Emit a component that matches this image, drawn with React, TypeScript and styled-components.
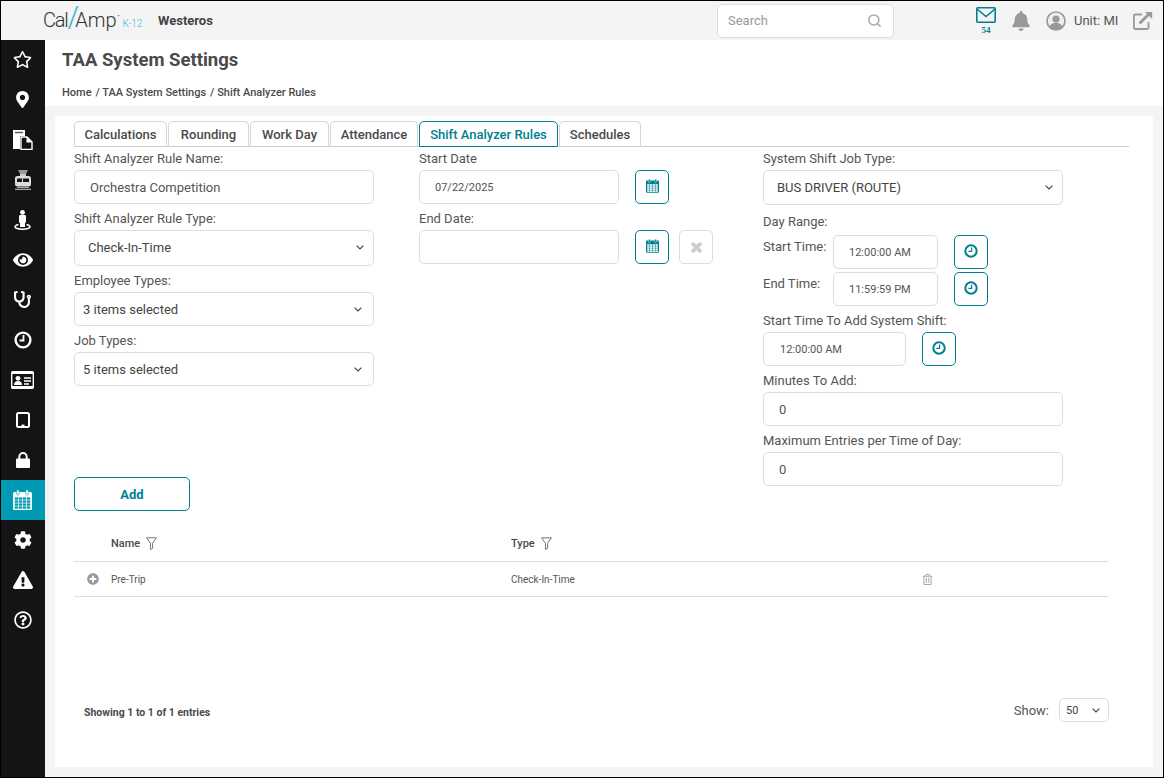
import React from "react";
import styled, { createGlobalStyle } from "styled-components";
import { Search } from "lucide-react";
import {
  FaRegStar, FaMapMarkerAlt, FaEye, FaStethoscope, FaCog,
  FaExclamationTriangle, FaRegQuestionCircle, FaBell,
  FaPlusCircle, FaRegTrashAlt,
} from "react-icons/fa";

const Global = createGlobalStyle`
  html, body { margin: 0; padding: 0; background: #000; }
  body { font-family: Roboto, "Liberation Sans", sans-serif; color: #4a4a4a; }
  * { box-sizing: border-box; }
`;

const teal = "#007f92";

const Frame = styled.div`
  width: 1164px; height: 778px; border: 1px solid #000; display: flex; flex-direction: column; background: #f4f4f4; overflow: hidden;
`;
const Header = styled.header`
  height: 39px; flex: none; display: flex; align-items: center; background: #f4f4f4;
`;
const Logo = styled.div`
  margin-left: 42px; width: 115px; display: flex; align-items: baseline; font-weight: 300; font-size: 20px; color: #333; line-height: 26px; padding-top: 1px;
`;
const LogoCal = styled.span`
  letter-spacing: -1.2px;
`;
const LogoSlash = styled.span`
  color: #27b4d6; font-size: 29px; margin: 0 -4px 0 0; line-height: 26px;
`;
const LogoMark = styled.span`
  font-size: 6px; line-height: 26px; position: relative; top: -9px; margin-left: 1px;
`;
const LogoK = styled.span`
  color: #35bcdc; font-size: 10px; margin-left: 3px; line-height: 26px;
`;
const Tenant = styled.div`
  font-size: 13px; font-weight: 700; color: #444; width: 559px;
`;
const SearchBox = styled.div`
  width: 177px; height: 34px; background: #fff; border: 1px solid #ddd; border-radius: 5px; display: flex; align-items: center; justify-content: space-between; padding: 0 11px 0 10px; font-size: 13px; color: #999;
`;
const HeaderIcons = styled.div`
  display: flex; align-items: center; margin-left: 82px;
`;
const MailWrap = styled.div`
  width: 20px; display: flex; flex-direction: column; align-items: center; color: ${teal};
`;
const MailCount = styled.span`
  font-family: "Liberation Serif", serif; font-weight: 700; font-size: 9px; line-height: 9px; margin-top: 3px;
`;
const BellSlot = styled.div`
  margin-left: 15px; width: 20px; display: flex; justify-content: center; color: #999;
`;
const UserSlot = styled.div`
  margin-left: 15px; display: flex; align-items: center; gap: 8px;
`;
const UnitText = styled.span`
  font-size: 13px; color: #555;
`;
const ExternalSlot = styled.div`
  margin-left: 15px; display: flex;
`;
const Body = styled.div`
  flex: 1; display: flex; min-height: 0;
`;
const Sidebar = styled.nav`
  width: 44px; flex: none; background: #141414; display: flex; flex-direction: column;
`;
const NavItem = styled.div<{ $active?: boolean }>`
  height: 40px; display: flex; align-items: center; justify-content: center; padding: 0 1px 1px 0; color: #fff; background: ${(p) => (p.$active ? "#009ab5" : "transparent")};
`;
const Main = styled.main`
  flex: 1; display: flex; flex-direction: column; min-width: 0;
`;
const TitleBand = styled.div`
  height: 66px; flex: none; background: #fff; padding-left: 17px;
`;
const Title = styled.h1`
  margin: 0; font-size: 18.5px; font-weight: 700; color: #4a4a4a; line-height: 24px; padding-top: 8px;
`;
const Crumbs = styled.div`
  margin-top: 14px; font-size: 11px; font-weight: 500; color: #4a4a4a; line-height: 14px; display: flex; gap: 4px;
`;
const Card = styled.section`
  margin: 10px; flex: 1; background: #fff; padding: 5px 45px 0 19px; display: flex; flex-direction: column;
`;
const Tabs = styled.div`
  display: flex; gap: 1px; height: 26px; border-bottom: 1px solid #ccc; margin-right: -21px;
`;
const Tab = styled.div<{ $active?: boolean; $w: number }>`
  width: ${(p) => p.$w}px; height: 26px; border: 1px solid ${(p) => (p.$active ? teal : "#d5d5d5")}; border-bottom: ${(p) => (p.$active ? `1px solid ${teal}` : "none")};
  border-radius: 5px 5px 0 0; display: flex; align-items: center; justify-content: center; font-size: 13px; font-weight: 500; color: ${(p) => (p.$active ? teal : "#4a4a4a")};
`;
const FormGrid = styled.div`
  display: grid; grid-template-columns: 345px 344px 300px; grid-template-rows: 1fr auto; height: 364px;
`;
const Col = styled.div`
  width: 300px; display: flex; flex-direction: column;
`;
const RightCol = styled(Col)`
  grid-column: 3; grid-row: 1 / span 2;
`;
const Label = styled.label`
  height: 23px; line-height: 23px; font-size: 13px; color: #555; display: block; white-space: nowrap;
`;
const Field = styled.div`
  margin-top: 3px;
  &:first-child { margin-top: 0; }
`;
const TextInput = styled.input<{ $w?: number; $pad?: number; $size?: number }>`
  display: block; width: ${(p) => (p.$w ? `${p.$w}px` : "100%")}; height: 34px; border: 1px solid #ddd; border-radius: 5px; padding: 0 0 0 ${(p) => p.$pad ?? 15}px; background: #fff;
  font-family: Roboto, sans-serif; font-size: ${(p) => p.$size ?? 13}px; color: #555; outline: none;
`;
const Select = styled.div`
  height: 36px; border: 1px solid #ddd; border-radius: 5px; background: #fff; display: flex; align-items: center; justify-content: space-between; padding: 0 9px 1px 13px; font-size: 13px; color: #444;
`;
const JobSelect = styled(Select)`
  height: 35px;
`;
const MultiSelect = styled(Select)`
  height: 34px; padding: 0 11px 0 8px;
`;
const DateRow = styled.div`
  display: flex; align-items: flex-start;
`;
const IconButton = styled.button<{ $muted?: boolean; $gap?: number; $lift?: number }>`
  width: 34px; height: 34px; flex: none; margin-left: ${(p) => p.$gap ?? 16}px; padding: 0 0 ${(p) => p.$lift ?? 2}px; background: #fff; border: 1px solid ${(p) => (p.$muted ? "#ddd" : teal)}; border-radius: 5px; display: flex; align-items: center; justify-content: center;
`;
const DayRange = styled(Label)`
  margin-top: 5px;
`;
const TimeRow = styled.div<{ $top: number }>`
  display: flex; margin-top: ${(p) => p.$top}px;
`;
const TimeLabel = styled(Label)`
  width: 70px;
`;
const AddButton = styled.button`
  grid-column: 1; grid-row: 2; width: 116px; height: 34px; background: #fff; border: 1px solid ${teal}; border-radius: 5px; font-family: Roboto, sans-serif; font-size: 13px; font-weight: 700; color: ${teal};
`;
const TableHead = styled.div`
  margin-top: 14px; height: 37px; border-bottom: 1px solid #ddd; display: grid; grid-template-columns: 37px 400px 1fr; align-items: center;
`;
const TableRow = styled.div`
  height: 35px; border-bottom: 1px solid #ddd; display: grid; grid-template-columns: 37px 400px 400px 1fr; align-items: center; font-size: 10px; color: #555;
`;
const HeadCell = styled.div`
  display: flex; align-items: center; gap: 6px; font-size: 11px; font-weight: 500; color: #4a4a4a;
`;
const Expand = styled.div`
  padding-left: 13px; display: flex; color: #999;
`;
const Trash = styled.div`
  padding-left: 11px; display: flex; color: #aaa;
`;
const Footer = styled.div`
  margin: 101px -1px 0 0; display: flex; align-items: center; justify-content: space-between; padding-left: 10px;
`;
const Showing = styled.div`
  font-size: 10.5px; font-weight: 700; color: #4a4a4a; padding-top: 4px;
`;
const ShowGroup = styled.div`
  display: flex; align-items: center; gap: 10px; font-size: 13px; color: #555;
`;
const ShowSelect = styled.div`
  width: 50px; height: 24px; border: 1px solid #ddd; border-radius: 5px; display: flex; align-items: center; justify-content: space-between; padding: 0 8px 0 6px; font-size: 11px; color: #444;
`;

const Chevron = () => (
  <svg width="8" height="5" viewBox="0 0 8 5" fill="none" stroke="#444" strokeWidth="1.2"><path d="M0.6 0.6L4 4l3.4-3.4" /></svg>
);
const Clock = () => (
  <svg width="14" height="14" viewBox="0 0 14 14" fill="none" stroke={teal}>
    <circle cx="7" cy="7" r="5.7" strokeWidth="2" />
    <path d="M7.6 3.6v3.8H4.4" strokeWidth="1.2" />
  </svg>
);
const Funnel = () => (
  <svg width="11" height="13" viewBox="0 0 11 13" fill="none" stroke="#666" strokeWidth="0.9"><path d="M0.6 0.8h9.8L6.6 6.2V11.4L4.4 12.4V6.2z" /></svg>
);
const Mail = () => (
  <svg width="20" height="16" viewBox="0 0 20 16" fill="none" stroke={teal} strokeWidth="1.6"><rect x="0.8" y="0.8" width="18.4" height="14.4" rx="1" /><path d="M1 2l9 7.5L19 2" /></svg>
);
const Avatar = () => (
  <svg width="20" height="20" viewBox="0 0 20 20">
    <circle cx="10" cy="10" r="9" fill="#f0f0f0" stroke="#999" strokeWidth="1.7" />
    <circle cx="10" cy="8" r="3.6" fill="#999" />
    <path d="M3.6 15.8c1-3 3.4-4 6.4-4s5.4 1 6.4 4a9 9 0 0 1-12.8 0z" fill="#999" />
  </svg>
);
const External = () => (
  <svg width="20" height="19" viewBox="0 0 20 19" fill="none" stroke="#999" strokeWidth="1.8">
    <path d="M9 3.5H2.4a1.5 1.5 0 0 0-1.5 1.5v11.5a1.5 1.5 0 0 0 1.5 1.5H14a1.5 1.5 0 0 0 1.5-1.5V11" />
    <path d="M6.5 12.5L17 2" strokeWidth="2.8" />
    <path d="M12 0.9h7.2v7.2z" fill="#999" stroke="none" />
  </svg>
);
const Calendar = ({ w, h, fg, bg }: { w: number; h: number; fg: string; bg: string }) => (
  <svg width={w} height={h} viewBox="0 0 19 20">
    <rect x="0" y="2" width="19" height="18" rx="1.5" fill={fg} />
    <rect x="3.6" y="0" width="2.6" height="5" rx="1" fill={fg} stroke={bg} strokeWidth="0.6" />
    <rect x="12.8" y="0" width="2.6" height="5" rx="1" fill={fg} stroke={bg} strokeWidth="0.6" />
    {[0, 1, 2, 3].map((r) =>
      [0, 1, 2, 3].map((c) => (
        <rect key={`${r}-${c}`} x={1.7 + c * 4.05} y={7.4 + r * 3} width="3.4" height="2.3" fill={bg} />
      ))
    )}
  </svg>
);
const CloseMark = () => (
  <svg width="13" height="13" viewBox="0 0 13 13" stroke="#ccc" strokeWidth="3.8"><path d="M2 2l9 9M11 2l-9 9" /></svg>
);
const Files = () => (
  <svg width="22" height="20" viewBox="0 0 22 20">
    <path d="M1 0h12v6H8v13H1z" fill="#fff" />
    <path d="M3 2.5h8" stroke="#555" strokeWidth="1.4" />
    <path d="M9 7h6l5 5v7.5H9z" fill="#141414" stroke="#fff" strokeWidth="1.4" />
    <path d="M14.5 7v5.5H20z" fill="#fff" />
  </svg>
);
const Train = () => (
  <svg width="18" height="20" viewBox="0 0 18 20">
    <path d="M4 0h10l-2 4H6z" fill="#999" />
    <rect x="6" y="4" width="6" height="2" fill="#ccc" />
    <rect x="1" y="6" width="16" height="10.5" rx="2.5" fill="#ddd" />
    <rect x="3" y="8.5" width="12" height="3.5" fill="#141414" />
    <path d="M8.5 8.5v3.5" stroke="#ddd" />
    <path d="M3 17.5h12M1 19.4h16" stroke="#aaa" strokeWidth="1.1" />
  </svg>
);
const Person = () => (
  <svg width="17" height="20" viewBox="0 0 17 20">
    <circle cx="8.5" cy="2.4" r="2.4" fill="#fff" />
    <path d="M5 6.4a1.4 1.4 0 0 1 1.4-1.4h4.2A1.4 1.4 0 0 1 12 6.4V12l-1 1v4H6v-4l-1-1z" fill="#fff" />
    <path d="M4.5 14.4C2 15 1 15.8 1 16.8c0 1.3 3.4 2.4 7.5 2.4s7.5-1.1 7.5-2.4c0-1-1-1.8-3.5-2.4" fill="none" stroke="#fff" strokeWidth="1.5" />
  </svg>
);
const NavClock = () => (
  <svg width="18" height="18" viewBox="0 0 18 18" fill="none" stroke="#fff"><circle cx="9" cy="9" r="7.4" strokeWidth="2.4" /><path d="M9.5 4v5.5H5.5" strokeWidth="1.8" /></svg>
);
const IdCard = () => (
  <svg width="23" height="18" viewBox="0 0 23 18">
    <rect x="0.7" y="0.7" width="21.6" height="16.6" rx="1" fill="#141414" stroke="#fff" strokeWidth="1.4" />
    <path d="M1 1h21v2H1zM1 15h21v2H1z" fill="#fff" />
    <circle cx="7" cy="7.3" r="2.4" fill="#fff" />
    <path d="M3 14c0-3 1.6-4 4-4s4 1 4 4z" fill="#fff" />
    <path d="M13 7h7M13 10h7M13 13h5" stroke="#fff" strokeWidth="1.3" />
  </svg>
);
const Tablet = () => (
  <svg width="14" height="16" viewBox="0 0 14 16">
    <rect x="1" y="1" width="12" height="14" rx="1.5" fill="none" stroke="#fff" strokeWidth="2" />
    <rect x="5.5" y="12.6" width="3" height="1.4" fill="#fff" />
  </svg>
);
const Lock = () => (
  <svg width="14" height="16" viewBox="0 0 14 16">
    <path d="M3.3 7V4.8a3.7 3.7 0 0 1 7.4 0V7" fill="none" stroke="#fff" strokeWidth="2" />
    <rect x="0" y="6.6" width="14" height="9.4" rx="1" fill="#fff" />
  </svg>
);

const navIcons: React.ReactNode[] = [
  <FaRegStar size={19} />, <FaMapMarkerAlt size={17} />, <Files />, <Train />, <Person />,
  <FaEye size={20} />, <FaStethoscope size={17} />, <NavClock />, <IdCard />, <Tablet />, <Lock />,
  <Calendar w={19} h={20} fg="#fff" bg="#009ab5" />, <FaCog size={18} />,
  <FaExclamationTriangle size={20} />, <FaRegQuestionCircle size={18} />,
];

const tabs: [string, number][] = [["Calculations", 93], ["Rounding", 81], ["Work Day", 79], ["Attendance", 88], ["Shift Analyzer Rules", 139], ["Schedules", 82]];
const CalBtn = () => <Calendar w={13} h={14} fg={teal} bg="#fff" />;

export default function App() {
  return (
    <Frame>
      <Global />
      <Header>
        <Logo><LogoCal>Cal</LogoCal><LogoSlash>/</LogoSlash>Amp<LogoMark>•</LogoMark><LogoK>K-12</LogoK></Logo>
        <Tenant>Westeros</Tenant>
        <SearchBox>Search<Search size={15} color="#aaa" strokeWidth={2.4} /></SearchBox>
        <HeaderIcons>
          <MailWrap><Mail /><MailCount>54</MailCount></MailWrap>
          <BellSlot><FaBell size={20} /></BellSlot>
          <UserSlot><Avatar /><UnitText>Unit: MI</UnitText></UserSlot>
          <ExternalSlot><External /></ExternalSlot>
        </HeaderIcons>
      </Header>
      <Body>
        <Sidebar>
          {navIcons.map((icon, i) => (
            <NavItem key={i} $active={i === 11}>{icon}</NavItem>
          ))}
        </Sidebar>
        <Main>
          <TitleBand>
            <Title>TAA System Settings</Title>
            <Crumbs><span>Home</span><span>/ TAA System Settings</span><span>/ Shift Analyzer Rules</span></Crumbs>
          </TitleBand>
          <Card>
            <Tabs>
              {tabs.map(([t, w], i) => (
                <Tab key={t} $w={w} $active={i === 4}>{t}</Tab>
              ))}
            </Tabs>
            <FormGrid>
              <Col>
                <Field><Label>Shift Analyzer Rule Name:</Label><TextInput readOnly value="Orchestra Competition" /></Field>
                <Field><Label>Shift Analyzer Rule Type:</Label><Select>Check-In-Time<Chevron /></Select></Field>
                <Field><Label>Employee Types:</Label><MultiSelect>3 items selected<Chevron /></MultiSelect></Field>
                <Field><Label>Job Types:</Label><MultiSelect>5 items selected<Chevron /></MultiSelect></Field>
              </Col>
              <Col>
                <Field>
                  <Label>Start Date</Label>
                  <DateRow><TextInput $w={200} $size={11} readOnly value="07/22/2025" /><IconButton><CalBtn /></IconButton></DateRow>
                </Field>
                <Field>
                  <Label>End Date:</Label>
                  <DateRow>
                    <TextInput $w={200} readOnly value="" />
                    <IconButton><CalBtn /></IconButton>
                    <IconButton $muted $gap={10} $lift={0}><CloseMark /></IconButton>
                  </DateRow>
                </Field>
              </Col>
              <AddButton>Add</AddButton>
              <RightCol>
                <Field><Label>System Shift Job Type:</Label><JobSelect>BUS DRIVER (ROUTE)<Chevron /></JobSelect></Field>
                <DayRange>Day Range:</DayRange>
                <TimeRow $top={2}>
                  <TimeLabel>Start Time:</TimeLabel>
                  <TextInput $w={105} $pad={15} $size={11} readOnly value="12:00:00 AM" />
                  <IconButton $lift={3}><Clock /></IconButton>
                </TimeRow>
                <TimeRow $top={3}>
                  <TimeLabel>End Time:</TimeLabel>
                  <TextInput $w={105} $pad={15} $size={11} readOnly value="11:59:59 PM" />
                  <IconButton $lift={3}><Clock /></IconButton>
                </TimeRow>
                <Field>
                  <Label>Start Time To Add System Shift:</Label>
                  <DateRow><TextInput $w={143} $pad={16} $size={11} readOnly value="12:00:00 AM" /><IconButton $lift={3}><Clock /></IconButton></DateRow>
                </Field>
                <Field><Label>Minutes To Add:</Label><TextInput readOnly value="0" /></Field>
                <Field><Label>Maximum Entries per Time of Day:</Label><TextInput readOnly value="0" /></Field>
              </RightCol>
            </FormGrid>
            <TableHead>
              <span />
              <HeadCell>Name <Funnel /></HeadCell>
              <HeadCell>Type <Funnel /></HeadCell>
            </TableHead>
            <TableRow>
              <Expand><FaPlusCircle size={12} /></Expand>
              <span>Pre-Trip</span>
              <span>Check-In-Time</span>
              <Trash><FaRegTrashAlt size={11} /></Trash>
            </TableRow>
            <Footer>
              <Showing>Showing 1 to 1 of 1 entries</Showing>
              <ShowGroup>Show:<ShowSelect>50<Chevron /></ShowSelect></ShowGroup>
            </Footer>
          </Card>
        </Main>
      </Body>
    </Frame>
  );
}
